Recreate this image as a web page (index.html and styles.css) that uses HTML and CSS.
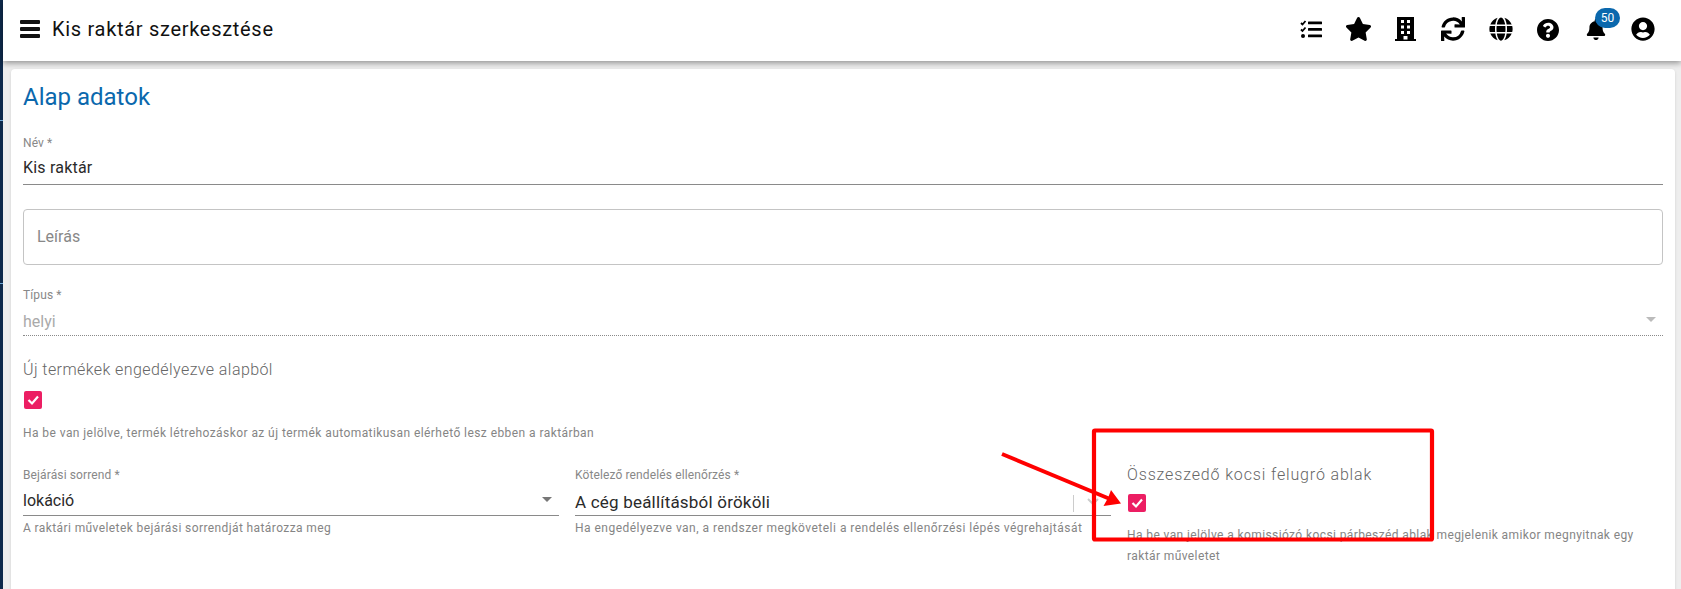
FILE: index.html
```html
<!DOCTYPE html>
<html lang="hu">
<head>
<meta charset="utf-8">
<title>Kis raktár szerkesztése</title>
<link rel="stylesheet" href="styles.css">
</head>
<body>
<div class="shell">
  <div class="rail"><span class="tick tick-a"></span><span class="tick tick-b"></span></div>
  <div class="main">
    <header class="topbar">
      <button class="menu" aria-label="Menü"><span></span><span></span><span></span></button>
      <h1 class="title">Kis raktár szerkesztése</h1>
      <nav class="actions">
        <span class="act"><svg class="i-tasks" viewBox="0 0 22 18"><path d="M1 3l1.500 1.500L5.500 1M1 9.500L2.500 11l3-3.500" fill="none" stroke="#000" stroke-width="1.800"/><circle cx="3" cy="16" r="2"/><rect x="8" y="1.500" width="14" height="2.800" rx=".6"/><rect x="8" y="8" width="14" height="2.800" rx=".6"/><rect x="8" y="14.500" width="14" height="2.800" rx=".6"/></svg></span>
        <span class="act"><svg class="i-star" viewBox="0 0 576 512"><path d="M259.300 17.800L194 150.200 47.900 171.500c-26.200 3.800-36.700 36.100-17.700 54.600l105.700 103-25 145.500c-4.500 26.300 23.200 46 46.400 33.700L288 439.600l130.700 68.700c23.200 12.200 50.900-7.400 46.400-33.700l-25-145.500 105.700-103c19-18.500 8.500-50.800-17.700-54.600L382 150.200 316.700 17.800c-11.700-23.600-45.600-23.900-57.400 0z"/></svg></span>
        <span class="act"><svg class="i-building" viewBox="0 0 21 24"><path fill-rule="evenodd" d="M2 0h17v22h2v2H0v-2h2zM6 3v3h3V3zm6 0v3h3V3zM6 8.500v3h3v-3zm6 0v3h3v-3zM6 14v3h3v-3zm6 0v3h3v-3zM8.500 19v3.500h4V19z"/></svg></span>
        <span class="act"><svg class="i-round" viewBox="0 0 512 512"><path d="M440.650 12.570l4 82.770A247.160 247.160 0 0 0 255.830 8C134.730 8 33.910 94.920 12.290 209.820A12 12 0 0 0 24.090 224h49.050a12 12 0 0 0 11.670-9.260 175.910 175.910 0 0 1 317-56.940l-101.460-4.860a12 12 0 0 0-12.570 12v47.410a12 12 0 0 0 12 12H500a12 12 0 0 0 12-12V12a12 12 0 0 0-12-12h-47.370a12 12 0 0 0-11.980 12.570zM255.830 432a175.610 175.610 0 0 1-146-77.800l101.800 4.870a12 12 0 0 0 12.570-12v-47.400a12 12 0 0 0-12-12H12a12 12 0 0 0-12 12V500a12 12 0 0 0 12 12h47.350a12 12 0 0 0 12-12.600l-4.150-82.570A247.170 247.170 0 0 0 255.830 504c121.110 0 221.930-86.920 243.550-201.820a12 12 0 0 0-11.800-14.180h-49.050a12 12 0 0 0-11.670 9.260A175.860 175.860 0 0 1 255.830 432z"/></svg></span>
        <span class="act"><svg class="i-round" viewBox="0 0 496 512"><path d="M336.500 160C322 70.700 287.800 8 248 8s-74 62.700-88.500 152h177zM152 256c0 22.200 1.200 43.500 3.300 64h185.300c2.100-20.500 3.300-41.800 3.300-64s-1.200-43.500-3.300-64H155.300c-2.100 20.500-3.300 41.800-3.300 64zm324.700-96c-28.600-67.900-86.500-120.400-158-141.600 24.400 33.800 41.200 84.700 50 141.600h108zM177.200 18.400C105.800 39.600 47.800 92.100 19.300 160h108c8.700-56.900 25.500-107.800 49.900-141.600zM487.400 192H372.700c2.100 21 3.300 42.500 3.300 64s-1.200 43-3.300 64h114.600c5.500-20.500 8.600-41.800 8.600-64s-3.100-43.500-8.500-64zM120 256c0-21.500 1.200-43 3.300-64H8.600C3.200 212.500 0 233.800 0 256s3.200 43.500 8.600 64h114.600c-2-21-3.200-42.500-3.200-64zm39.500 96c14.500 89.300 48.700 152 88.500 152s74-62.700 88.500-152h-177zm159.300 141.600c71.400-21.200 129.400-73.700 158-141.600h-108c-8.800 56.900-25.600 107.800-50 141.600zM19.300 352c28.600 67.900 86.500 120.400 158 141.600-24.400-33.800-41.200-84.700-50-141.600h-108z"/></svg></span>
        <span class="act"><svg class="i-help" viewBox="8 8 496 496"><path d="M504 256c0 136.997-111.043 248-248 248S8 392.997 8 256C8 119.083 119.043 8 256 8s248 111.083 248 248zM262.655 90c-54.497 0-89.255 22.957-116.549 63.758-3.536 5.286-2.353 12.415 2.715 16.258l34.699 26.310c5.205 3.947 12.621 3.008 16.665-2.122 17.864-22.658 30.113-35.797 57.303-35.797 20.429 0 45.698 13.148 45.698 32.958 0 14.976-12.363 22.667-32.534 33.976C247.128 238.528 216 254.941 216 296v4c0 6.627 5.373 12 12 12h56c6.627 0 12-5.373 12-12v-1.333c0-28.462 83.186-29.647 83.186-106.667 0-58.002-60.165-102-116.531-102zM256 338c-25.365 0-46 20.635-46 46 0 25.364 20.635 46 46 46s46-20.636 46-46c0-25.365-20.635-46-46-46z"/></svg></span>
        <span class="act"><svg class="i-bell" viewBox="0 0 448 512"><path d="M224 512c35.320 0 63.970-28.650 63.970-64H160.030c0 35.350 28.650 64 63.970 64zm215.390-149.710c-19.320-20.760-55.470-51.990-55.470-154.290 0-77.700-54.480-139.900-127.940-155.160V32c0-17.670-14.320-32-31.980-32s-31.980 14.330-31.980 32v20.840C118.560 68.100 64.080 130.300 64.080 208c0 102.300-36.150 133.530-55.470 154.290-6 6.450-8.660 14.160-8.610 21.710.11 16.400 12.980 32 32.100 32h383.800c19.120 0 32-15.600 32.100-32 .05-7.550-2.610-15.270-8.610-21.710z"/></svg><span class="badge">50</span></span>
        <span class="act"><svg class="i-round" viewBox="0 0 496 512"><path d="M248 8C111 8 0 119 0 256s111 248 248 248 248-111 248-248S385 8 248 8zm0 96c48.600 0 88 39.400 88 88s-39.400 88-88 88-88-39.400-88-88 39.400-88 88-88zm0 344c-58.700 0-111.300-26.600-146.500-68.200 18.800-35.400 55.600-59.800 98.500-59.800 2.400 0 4.800.4 7.100 1.100 13 4.200 26.600 6.900 40.900 6.900 14.300 0 28-2.700 40.900-6.900 2.300-.7 4.700-1.100 7.100-1.100 42.900 0 79.700 24.400 98.500 59.800C359.300 421.400 306.700 448 248 448z"/></svg></span>
      </nav>
    </header>
    <main class="card">
      <h2 class="heading">Alap adatok</h2>
      <div class="field f-name">
        <label class="lbl">Név *</label>
        <div class="val line val-name">Kis raktár</div>
      </div>
      <div class="outlined">Leírás</div>
      <div class="field f-type">
        <label class="lbl">Típus *</label>
        <div class="val dotted">helyi<i class="caret caret-off"></i></div>
      </div>
      <div class="check-block f-new">
        <div class="check-title">Új termékek engedélyezve alapból</div>
        <span class="box"><svg viewBox="0 0 18 18"><path d="M4.500 9l3.500 3.500 6-7" fill="none" stroke="#fff" stroke-width="2.200"/></svg></span>
        <p class="hint hint-check">Ha be van jelölve, termék létrehozáskor az új termék automatikusan elérhető lesz ebben a raktárban</p>
      </div>
      <div class="cols">
        <div class="field">
          <label class="lbl">Bejárási sorrend *</label>
          <div class="val line">lokáció<i class="caret"></i></div>
          <p class="hint">A raktári műveletek bejárási sorrendját határozza meg</p>
        </div>
        <div class="field">
          <label class="lbl">Kötelező rendelés ellenőrzés *</label>
          <div class="val line val-low">A cég beállításból örököli<span class="sep"></span><svg class="chev" viewBox="0 0 12 7"><path d="M1 1l5 5 5-5" fill="none" stroke="#ccc" stroke-width="2"/></svg></div>
          <p class="hint hint-long">Ha engedélyezve van, a rendszer megköveteli a rendelés ellenőrzési lépés végrehajtását</p>
        </div>
        <div class="check-block wide">
          <div class="check-title">Összeszedő kocsi felugró ablak</div>
          <span class="box"><svg viewBox="0 0 18 18"><path d="M4.500 9l3.500 3.500 6-7" fill="none" stroke="#fff" stroke-width="2.200"/></svg></span>
          <p class="hint hint-check">Ha be van jelölve a komissiózó kocsi párbeszéd ablak megjelenik amikor megnyitnak egy raktár műveletet</p>
        </div>
      </div>
    </main>
  </div>
</div>
<svg class="annot" viewBox="0 0 1681 589"><rect x="1094" y="430.500" width="338" height="109" rx="1" fill="none" stroke="#f00" stroke-width="4.200"/><path d="M1002 454L1110 499" fill="none" stroke="#f00" stroke-width="4"/><path d="M1121 503.500L1103.500 506L1108 498L1111 490z" fill="#f00"/></svg>
</body>
</html>
```
FILE: styles.css
```css
* { box-sizing: border-box; }
html, body { margin: 0; height: 100%; }
body { font-family: Roboto, "Liberation Sans", sans-serif; background: #eee; overflow: hidden; position: relative; }
.shell { display: flex; height: 589px; }
.rail { width: 3px; flex: none; background: #0e2a4c; }
.tick { display: block; height: 1px; background: #6fa8d6; }
.tick-a { margin-top: 120px; }
.tick-b { margin-top: 162px; }
.main { flex: 1; min-width: 0; }
.topbar { height: 61px; background: #fff; display: flex; align-items: center; padding: 0 14px 3px 17px; box-shadow: 0 2px 6px rgba(0,0,0,.4); position: relative; }
.menu { width: 32px; height: 18px; padding: 0; border: 0; background: none; display: flex; flex-direction: column; justify-content: space-between; flex: none; }
.menu span { display: block; width: 20px; height: 4px; border-radius: 1px; background: #111; }
.title { margin: 0; font-size: 20px; font-weight: 400; color: #111; letter-spacing: .7px; flex: 1; }
.actions { display: flex; }
.act { width: 47.500px; height: 58px; display: flex; align-items: center; justify-content: center; position: relative; }
.act svg { display: block; fill: #000; }
.i-tasks { width: 22px; height: 18px; }
.i-star { width: 27px; height: 24px; }
.i-building { width: 21px; height: 24px; }
.i-round { width: 24px; height: 24px; }
.i-help { width: 22px; height: 22px; margin-top: 1px; }
.i-bell { width: 20px; height: 21px; margin-top: 1px; }
.badge { position: absolute; left: 23px; top: 8px; min-width: 25px; height: 20px; border-radius: 10px; background: #0b68ad; color: #fff; font-size: 12px; line-height: 20px; text-align: center; }
.card { margin: 8px 6px 0 8px; height: 530px; background: #fff; border-radius: 4px; padding: 14px 12px 0 12px; box-shadow: 0 1px 3px rgba(0,0,0,.12); }
.heading { margin: 0; font-size: 24px; line-height: 28px; font-weight: 400; color: #0b68ad; }
.field { min-width: 0; }
.lbl { display: block; font-size: 12px; line-height: 14px; color: #888; letter-spacing: .12px; }
.val { font-size: 16px; line-height: 20px; color: #2a2a2a; position: relative; padding-top: 10px; height: 34px; }
.val-name { padding-top: 8px; height: 35px; letter-spacing: .2px; }
.line { border-bottom: 1px solid #8a8a8a; }
.dotted { border-bottom: 1px dotted #8a8a8a; color: #aaa; }
.f-name { margin-top: 25px; }
.outlined { margin-top: 24px; height: 56px; border: 1px solid #c4c4c4; border-radius: 4px; padding: 17px 13px; font-size: 16px; line-height: 20px; color: #888; }
.f-type { margin-top: 23px; }
.f-new { margin-top: 24px; }
.caret { position: absolute; right: 7px; top: 15px; width: 0; height: 0; border: 5px solid transparent; border-top-color: #777; border-bottom-width: 0; }
.caret-off { border-top-color: #bbb; }
.check-title { font-size: 16px; font-weight: 300; line-height: 20px; color: #666; letter-spacing: .42px; }
.wide .check-title { letter-spacing: .85px; margin-top: 1px; }
.box { display: block; width: 18px; height: 18px; margin: 11px 0 0 1px; background: #ec1e63; border-radius: 2px; }
.wide .box { margin-top: 9px; }
.box svg { display: block; width: 18px; height: 18px; }
.hint { margin: 3px 0 0; font-size: 12px; line-height: 19px; color: #858585; letter-spacing: .4px; }
.hint-long { letter-spacing: .48px; }
.hint-check { margin-top: 15px; letter-spacing: .43px; }
.wide .hint-check { margin-top: 13px; line-height: 21px; letter-spacing: .4px; }
.cols { display: grid; grid-template-columns: 536px 536px 1fr; column-gap: 16px; margin-top: 21px; }
.cols .field { padding-top: 4px; }
.cols .val { padding-top: 9px; }
.cols .val-low { padding-top: 10px; font-size: 17px; letter-spacing: .2px; }
.sep { position: absolute; right: 37px; top: 13px; width: 1px; height: 17px; background: #ccc; }
.chev { position: absolute; right: 12px; top: 16px; width: 12px; height: 7px; }
.annot { position: absolute; left: 0; top: 0; width: 1681px; height: 589px; pointer-events: none; }
```
